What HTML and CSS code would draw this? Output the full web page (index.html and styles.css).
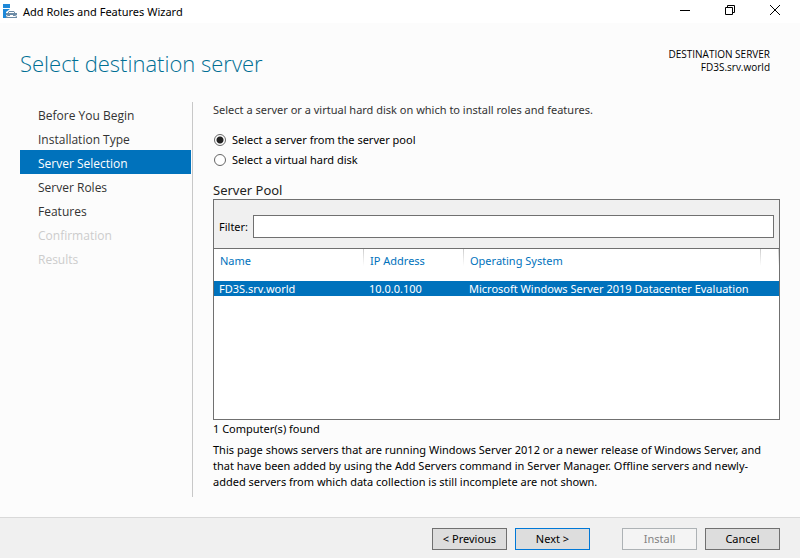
FILE: index.html
```html
<!DOCTYPE html>
<html lang="en">
<head>
  <meta charset="UTF-8">
  <meta name="viewport" content="width=device-width, initial-scale=1.0">
  <title>Add Roles and Features Wizard</title>
  <link rel="stylesheet" href="styles.css">
</head>
<body>
  <!-- Title Bar -->
  <div class="title-bar">
    <svg class="app-icon" width="16" height="16" viewBox="0 0 16 16" aria-hidden="true">
      <path fill="#1e88d8" d="M1 0h7v4H1zM1 5h7L4 8v6H1z"/>
      <path fill="none" stroke="#6d8ca6" d="M6 9.500l1-2h5l1 2"/>
      <path fill="#6d8ca6" d="M4 9h11v2l-2 1h-2v-1H8v1H6l-2-1zM4 12l2 1h7l2-1v2H4z"/>
    </svg>
    <span class="window-title">Add Roles and Features Wizard</span>
    <div class="window-buttons">
      <button type="button" aria-label="Minimize">
        <svg width="12" height="12" viewBox="0 0 12 12"><path d="M1 6.5h10"/></svg>
      </button>
      <button type="button" aria-label="Restore">
        <svg width="12" height="12" viewBox="0 0 12 12"><path d="M1.500 3.500h7v7h-7zM3.500 3.500v-2h7v7h-2"/></svg>
      </button>
      <button type="button" aria-label="Close">
        <svg width="12" height="12" viewBox="0 0 12 12"><path d="M1 1l10 10M11 1L1 11"/></svg>
      </button>
    </div>
  </div>

  <!-- Page Header -->
  <header class="page-header">
    <h1>Select destination server</h1>
    <div class="destination">
      <div>DESTINATION SERVER</div>
      <div>FD3S.srv.world</div>
    </div>
  </header>

  <div class="wizard">
    <!-- Steps -->
    <nav class="steps">
      <a href="#before">Before You Begin</a>
      <a href="#type">Installation Type</a>
      <a href="#selection" class="active" aria-current="step">Server Selection</a>
      <a href="#roles">Server Roles</a>
      <a href="#features">Features</a>
      <a class="disabled" aria-disabled="true">Confirmation</a>
      <a class="disabled" aria-disabled="true">Results</a>
    </nav>

    <!-- Server Selection -->
    <main class="content">
      <p class="intro">Select a server or a virtual hard disk on which to install roles and features.</p>

      <div class="radio-row">
        <input type="radio" name="target" id="targetPool" checked>
        <label for="targetPool">Select a server from the server pool</label>
      </div>
      <div class="radio-row">
        <input type="radio" name="target" id="targetDisk">
        <label for="targetDisk">Select a virtual hard disk</label>
      </div>

      <h2>Server Pool</h2>
      <div class="pool">
        <div class="filter">
          <label for="filter">Filter:</label>
          <input type="text" id="filter">
        </div>
        <table>
          <colgroup>
            <col class="col-name">
            <col class="col-ip">
            <col class="col-os">
            <col class="col-end">
          </colgroup>
          <thead>
            <tr><th>Name</th><th>IP Address</th><th>Operating System</th><th></th></tr>
          </thead>
          <tbody>
            <tr class="selected">
              <td>FD3S.srv.world</td>
              <td>10.0.0.100</td>
              <td colspan="2">Microsoft Windows Server 2019 Datacenter Evaluation</td>
            </tr>
          </tbody>
        </table>
      </div>

      <p class="count">1 Computer(s) found</p>
      <p class="note">This page shows servers that are running Windows Server 2012 or a newer release of Windows Server, and that have been added by using the Add Servers command in Server Manager. Offline servers and newly-added servers from which data collection is still incomplete are not shown.</p>
    </main>
  </div>

  <!-- Wizard Buttons -->
  <footer class="footer">
    <button type="button">&lt; Previous</button>
    <button type="button" class="primary">Next &gt;</button>
    <button type="button" class="install" disabled>Install</button>
    <button type="button">Cancel</button>
  </footer>
</body>
</html>
```
FILE: styles.css
```css
/* General Styles */
* {
  box-sizing: border-box;
}

body {
  display: flex;
  flex-direction: column;
  min-height: 100vh;
  margin: 0;
  font-family: "Segoe UI", "Noto Sans", sans-serif;
  font-size: 11px;
  line-height: 16px;
  color: #000;
  background-color: #fcfcfc;
}

h1, h2, p {
  margin: 0;
  font-weight: 400;
}

/* Title Bar */
.title-bar {
  display: flex;
  align-items: center;
  height: 23px;
  padding: 0 3px 0 2px;
  background-color: #fff;
}

.window-title {
  margin-left: 5px;
}

.window-buttons {
  display: flex;
  align-self: flex-start;
  margin-left: auto;
}

.window-buttons button {
  display: flex;
  align-items: center;
  justify-content: center;
  width: 45px;
  height: 20px;
  padding: 0;
  border: none;
  background: none;
}

.window-buttons path {
  fill: none;
  stroke: #000;
}

/* Page Header */
.page-header {
  display: flex;
  justify-content: space-between;
  height: 79px;
  padding: 24px 30px 0 20px;
}

h1 {
  font-family: "Segoe UI", "Open Sans", sans-serif;
  font-size: 22px;
  font-weight: 300;
  line-height: 32px;
  color: #006f94;
}

.destination {
  padding-top: 1px;
  font-family: "Segoe UI", "Open Sans", sans-serif;
  font-size: 10px;
  line-height: 13px;
  text-align: right;
}

/* Wizard Layout */
.wizard {
  display: flex;
  flex: 1;
  padding: 0 20px 20px;
}

.steps {
  flex: none;
  width: 173px;
  padding-right: 1px;
  border-right: 1px solid #c8c8c8;
}

.steps a {
  display: block;
  height: 24px;
  padding: 2px 0 0 18px;
  font-family: "Segoe UI", "Open Sans", sans-serif;
  font-size: 12px;
  line-height: 24px;
  color: #333;
  text-decoration: none;
}

.steps .active {
  color: #fff;
  background-color: #0072bc;
}

.steps .disabled {
  color: #ccc;
}

/* Content */
.content {
  display: flex;
  flex: 1;
  flex-direction: column;
  min-width: 0;
  padding-left: 20px;
}

.intro {
  margin-bottom: 12px;
  color: #333;
}

.radio-row {
  display: flex;
  align-items: center;
  height: 20px;
}

input[type="radio"] {
  appearance: none;
  width: 12px;
  height: 12px;
  margin: 0 6px 0 1px;
  border: 1px solid #666;
  border-radius: 50%;
  background-color: #fff;
}

input[type="radio"]:checked {
  background-image: radial-gradient(circle, #222 3px, transparent 4px);
}

h2 {
  margin-top: 11px;
  font-size: 13px;
  line-height: 18px;
  color: #222;
}

/* Server Pool */
.pool {
  flex: 1;
  border: 1px solid #707070;
  background-color: #fff;
}

.filter {
  display: flex;
  align-items: center;
  height: 49px;
  padding: 5px 5px 0;
  border-bottom: 1px solid #707070;
  background-color: #f0f0f0;
}

.filter input {
  flex: 1;
  height: 23px;
  margin-left: 5px;
  padding: 0 4px;
  border: 1px solid #707070;
  background-color: #fff;
  font: inherit;
}

table {
  width: 100%;
  border-collapse: collapse;
  table-layout: fixed;
}

.col-name {
  width: 150px;
}

.col-ip {
  width: 100px;
}

.col-end {
  width: 18px;
}

th {
  height: 32px;
  padding: 0 6px 8px;
  font-weight: 400;
  text-align: left;
  color: #0072bc;
  background: linear-gradient(#ccc, #fff) right top / 1px 17px no-repeat;
}

td {
  padding: 0 5px;
  line-height: 15px;
  white-space: nowrap;
}

.selected {
  color: #fff;
  background-color: #0072bc;
}

.count {
  margin: 1px 0 5px;
}

.note {
  margin-bottom: 7px;
}

/* Wizard Buttons */
.footer {
  display: flex;
  justify-content: flex-end;
  gap: 8px;
  padding: 10px 20px 8px;
  border-top: 1px solid #d9d9d9;
  background-color: #f0f0f0;
}

.footer button {
  width: 75px;
  height: 22px;
  padding: 0;
  border: 1px solid #707070;
  background-color: #ddd;
  font: inherit;
  color: #000;
}

.footer .primary {
  border-color: #0078d7;
}

.footer .install {
  margin-left: 24px;
}

.footer button:disabled {
  border-color: #adb2b5;
  background-color: #f4f4f4;
  color: #838383;
}
```
